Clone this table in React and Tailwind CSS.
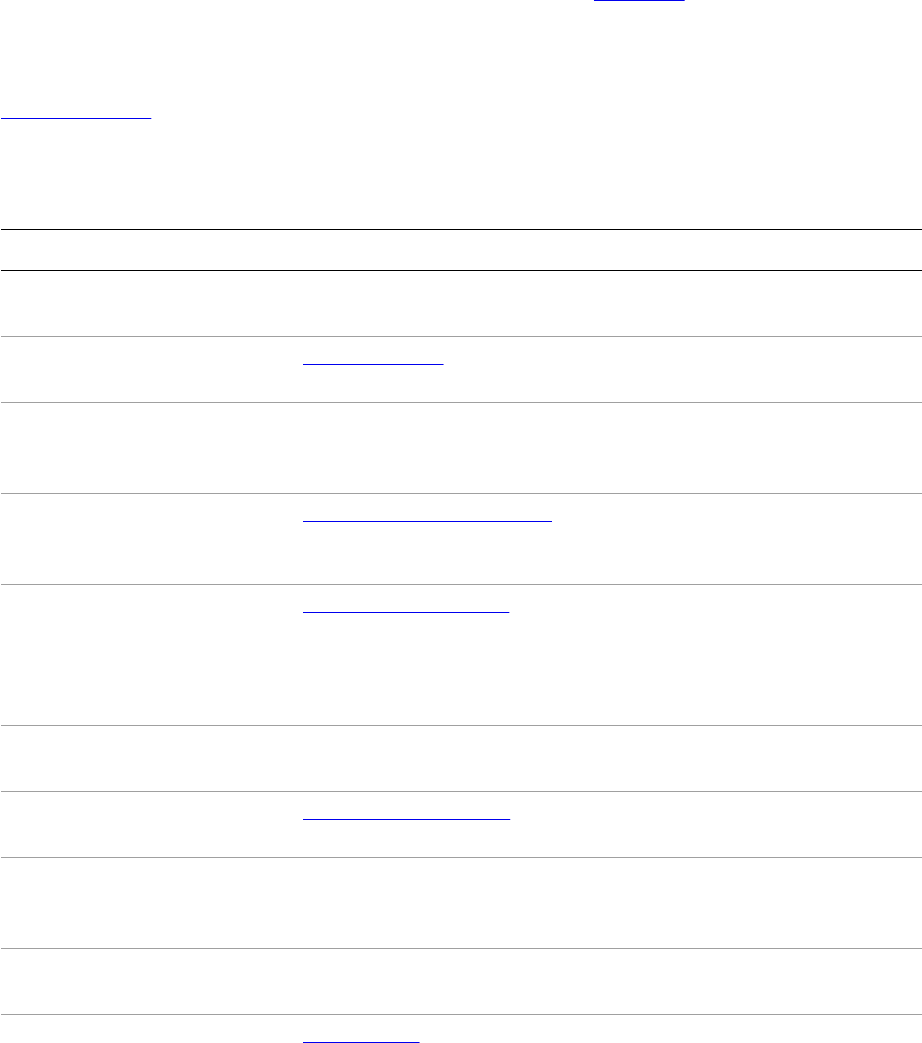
const rows = [
  { name: "Overview", lines: ["A short introduction to the project and its goals."] },
  { name: "Plugins", link: "Plugin development", lines: [] },
  {
    name: "Installation",
    lines: [
      "Step-by-step setup on Linux, macOS and Windows.",
      "Includes notes on system requirements.",
    ],
  },
  {
    name: "Command line",
    link: "Command line interface references",
    lines: ["Every flag and subcommand, with examples."],
  },
  {
    name: "Upgrading",
    link: "Migration guide from v1 to v2",
    lines: [
      "Breaking changes between major versions.",
      "Deprecated options and their replacements.",
      "How to convert old configuration files.",
    ],
  },
  { name: "Configuration", lines: ["All settings read from the config file."] },
  { name: "API", link: "API reference documentation", lines: [] },
  {
    name: "Troubleshooting",
    lines: ["Common errors and how to fix them.", "Collecting logs for a bug report."],
  },
  { name: "Support", lines: ["Mailing lists, chat and issue tracker."] },
  { name: "Community", link: "Code of conduct", lines: [] },
];

const Link = ({ children }) => (
  <a
    href="#"
    className="text-transparent underline decoration-[#0000ee] [text-decoration-skip-ink:none]"
  >
    {children}
  </a>
);

export default function App() {
  return (
    <div className="bg-white min-h-screen overflow-hidden pl-[1px] font-['Liberation_Sans',Arial,sans-serif] text-[16px] leading-[25px] text-transparent">
      {/* INTRO */}
      <p className="-mt-[19px] mb-[18px] whitespace-nowrap">
        A full description of every option and command is available in the bundled and Web{" "}
        <Link>User manual</Link>.
      </p>

      <p className="mb-[25px]">
        The sections below collect the most useful pages for new and experienced users alike. Each entry
        points to a maintained document that is updated with every release, so you can rely on it
        matching the version you have installed.
      </p>

      <p>
        <Link>Configuration Guides</Link> describe how to set up the tool for typical projects.
      </p>

      <h2 className="mt-[48px] mb-[32px] font-bold">Available resources</h2>

      {/* TABLE */}
      <div className="border-t border-black">
        <div className="grid grid-cols-[302px_1fr] h-[41px] border-b border-black font-bold">
          <div className="pt-[7px]">Topic</div>
          <div className="pt-[7px]">Page</div>
        </div>

        {rows.map((r) => (
          <div
            key={r.name}
            className="grid grid-cols-[302px_1fr] border-b border-[#a0a0a0] pt-[8px] pb-[32px]"
          >
            <div>{r.name}</div>
            <div>
              {r.link && (
                <div>
                  <Link>{r.link}</Link>
                </div>
              )}
              {r.lines.map((l) => (
                <div key={l}>{l}</div>
              ))}
            </div>
          </div>
        ))}
      </div>
    </div>
  );
}
